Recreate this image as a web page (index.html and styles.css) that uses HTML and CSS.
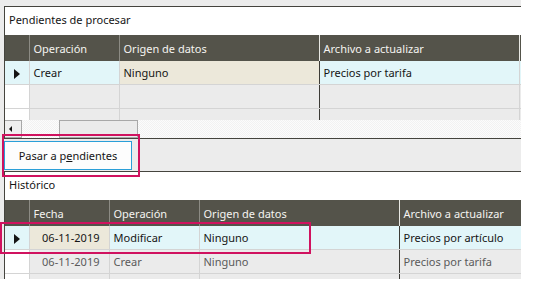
FILE: index.html
```html
<!DOCTYPE html>
<html lang="es">
<head>
  <meta charset="UTF-8" />
  <title>Actualización de precios</title>
  <link rel="stylesheet" href="styles.css">
</head>
<body>
  <div class="screen">
    <section class="panel">
      <div class="panel-title">Pendientes de procesar</div>
      <div class="grid-view">
        <table class="grid grid-top">
          <colgroup>
            <col class="c-rh"><col style="width:90px"><col style="width:200px"><col style="width:200px"><col>
          </colgroup>
          <thead>
            <tr><th></th><th>Operación</th><th>Origen de datos</th><th class="frozen">Archivo a actualizar</th><th></th></tr>
          </thead>
          <tbody>
            <tr class="current">
              <td class="rh"><span class="arrow"></span></td>
              <td>Crear</td>
              <td class="sel">Ninguno</td>
              <td class="frozen">Precios por tarifa</td>
              <td></td>
            </tr>
            <tr class="empty"><td class="rh"></td><td></td><td></td><td class="frozen"></td><td></td></tr>
            <tr class="empty"><td class="rh"></td><td></td><td></td><td class="frozen"></td><td></td></tr>
          </tbody>
        </table>
      </div>
      <div class="hscroll">
        <div class="sb-btn"><span class="sb-arrow"></span></div>
        <div class="sb-gap"></div>
        <div class="sb-thumb"></div>
      </div>
    </section>

    <div class="toolbar">
      <button class="btn">Pasar a p<u>e</u>ndientes</button>
    </div>

    <section class="panel panel-bottom">
      <div class="panel-title">Histórico</div>
      <div class="grid-view">
        <table class="grid">
          <colgroup>
            <col class="c-rh"><col style="width:80px"><col style="width:90px"><col style="width:200px"><col>
          </colgroup>
          <thead>
            <tr><th></th><th>Fecha</th><th>Operación</th><th>Origen de datos</th><th class="frozen">Archivo a actualizar</th></tr>
          </thead>
          <tbody>
            <tr class="current">
              <td class="rh"><span class="arrow"></span></td>
              <td class="sel date">06-11-2019</td>
              <td>Modificar</td>
              <td>Ninguno</td>
              <td class="frozen">Precios por artículo</td>
            </tr>
            <tr class="empty old">
              <td class="rh"></td>
              <td class="date">06-11-2019</td>
              <td>Crear</td>
              <td>Ninguno</td>
              <td class="frozen">Precios por tarifa</td>
            </tr>
            <tr class="empty"><td class="rh"></td><td></td><td></td><td></td><td class="frozen"></td></tr>
          </tbody>
        </table>
      </div>
    </section>

    <div class="mark mark-btn"></div>
    <div class="mark mark-row"></div>
  </div>
</body>
</html>
```

FILE: styles.css
```css
body {
  margin: 0;
  background: #ffffff;
  font-family: "Noto Sans", "Open Sans", sans-serif;
  font-size: 11px;
  color: #151515;
}
.screen {
  position: relative;
  width: 521px;
  height: 279px;
  overflow: hidden;
  background: #ececec;
  padding-top: 6px;
  box-sizing: border-box;
}
.panel {
  margin-left: 4px;
  background: #ffffff;
  border-top: 1px solid #45443e;
  border-left: 1px solid #45443e;
  border-bottom: 1px solid #45443e;
}
.panel-bottom {
  border-bottom: none;
}
.panel-title {
  height: 28px;
  line-height: 26px;
  padding-left: 4px;
}
.grid-view {
  height: 85px;
  overflow: hidden;
}
.panel-bottom .grid-view {
  height: 80px;
}
.grid {
  border-collapse: collapse;
  table-layout: fixed;
  width: 516px;
}
.grid .c-rh {
  width: 24px;
}
.grid th {
  height: 26px;
  padding: 0 4px;
  background: #54534a;
  color: #f4f4f0;
  font-weight: normal;
  text-align: left;
  border-left: 1px solid #8c8b84;
  white-space: nowrap;
  overflow: hidden;
}
.grid th:first-child {
  border-left: none;
}
.grid td {
  height: 23px;
  padding: 0 4px;
  background: #e2f6f9;
  border-left: 1px solid #d4d4d4;
  border-bottom: 1px solid #d4d4d4;
  white-space: nowrap;
  overflow: hidden;
}
.grid td:first-child {
  border-left: none;
}
.grid td.sel {
  background: #ece8da;
}
.grid .frozen {
  border-left: 1px solid #3c3b36;
}
.grid th.frozen {
  border-left-color: #e8e8e4;
}
.grid-top th:last-child {
  border-left: 1px solid #e8e8e4;
  padding: 0;
}
.grid tr.empty td {
  background: #ebebeb;
}
.grid tr.empty td.rh {
  background: #ffffff;
}
.grid tr.current td.rh {
  background: #e2f6f9;
}
.grid td.rh {
  padding: 0;
  text-align: center;
}
.grid td.date {
  text-align: right;
  padding-right: 9px;
}
.grid tr.old td {
  color: #5a5a5a;
}
.arrow {
  display: inline-block;
  width: 0;
  height: 0;
  border-top: 5px solid transparent;
  border-bottom: 5px solid transparent;
  border-left: 6px solid #151515;
  vertical-align: middle;
}
.hscroll {
  display: flex;
  height: 18px;
  background: repeating-conic-gradient(#f2f2f2 0 25%, #fcfcfc 0 50%) 0 0 / 2px 2px;
}
.sb-btn {
  width: 16px;
  border: 1px solid #a8a8a8;
  border-left: none;
  background: #efefef;
  display: flex;
  align-items: center;
  justify-content: center;
}
.sb-arrow {
  width: 0;
  height: 0;
  border-top: 3px solid transparent;
  border-bottom: 3px solid transparent;
  border-right: 3px solid #111111;
  margin-left: -6px;
}
.sb-gap {
  width: 37px;
}
.sb-thumb {
  width: 77px;
  border: 1px solid #a8a8a8;
  background: #ebebeb;
}
.toolbar {
  height: 32px;
  padding: 2px 0 0 4px;
  box-sizing: border-box;
}
.btn {
  width: 128px;
  height: 29px;
  border: 1px solid #2a9fd8;
  background: #fdfdfd;
  font-family: inherit;
  font-size: 11px;
  color: #151515;
  padding: 0;
}
.mark {
  position: absolute;
  border: 2px solid #d0125f;
}
.mark-btn {
  left: 2px;
  top: 134px;
  width: 134px;
  height: 39px;
}
.mark-row {
  left: 0;
  top: 222px;
  width: 307px;
  height: 28px;
}
```
